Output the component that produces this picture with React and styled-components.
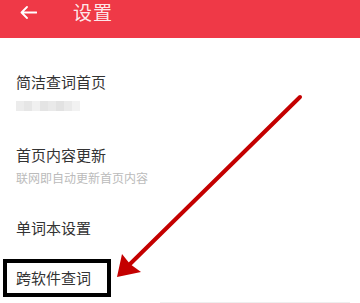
import styled, { createGlobalStyle } from 'styled-components';

const Global = createGlobalStyle`
  html, body {
    margin: 0;
    padding: 0;
    background: #fff;
    overflow: hidden;
  }
  body {
    font-family: "Noto Sans CJK SC", "Noto Sans", sans-serif;
  }
`

const Page = styled.div`
  position: relative;
  width: 360px;
  height: 303px;
  overflow: hidden;
  background: #fff;
`

const Header = styled.header`
  height: 38px;
  background: #ef3947;
  display: flex;
  align-items: flex-start;
  padding: 1px 0 0 20px;
  box-sizing: border-box;
`

const BackButton = styled.div`
  width: 17px;
  height: 22px;
  display: flex;
  align-items: center;
  margin-right: 36px;
`

const Title = styled.h1`
  margin: 0;
  font-size: 19px;
  line-height: 22px;
  font-weight: 400;
  color: rgba(255, 255, 255, 0.9);
  letter-spacing: 1px;
`

const List = styled.div`
  padding-top: 16px;
`

const Item = styled.div`
  display: flex;
  flex-direction: column;
  justify-content: center;
  padding: 0 16px;
  height: ${({ $h }) => $h}px;
  box-sizing: border-box;
`

const ItemTitle = styled.div`
  font-size: 15px;
  line-height: 20px;
  color: #333;
`

const ItemSub = styled.div`
  margin-top: 5px;
  font-size: 12px;
  line-height: 16px;
  color: #bbb;
`

const Pixelated = styled.div`
  display: flex;
  margin-top: 9px;
  height: 10px;
  width: 64px;
`

const Cell = styled.div`
  flex: 1;
  background: ${({ $shade }) => $shade};
`

const Footer = styled.div`
  margin: 0 10px 0 160px;
  border-top: 1px solid #eee;
`

const Highlight = styled.div`
  position: absolute;
  left: 3px;
  top: 259px;
  width: 108px;
  height: 38px;
  border: 4px solid #000;
  box-sizing: border-box;
`

const Overlay = styled.svg`
  position: absolute;
  left: 0;
  top: 0;
  pointer-events: none;
`

const shades = ['#ececec', '#e6e6e6', '#f0f0f0', '#e4e4e4', '#e9e9e9', '#e2e2e2', '#eaeaea', '#f2f2f2']

const App = () => {
  return (
    <>
      <Global />
      <Page>
        <Header>
          <BackButton>
            <svg width="17" height="13" viewBox="0 0 17 13" fill="none">
              <path d="M16.5 6.5H1.5M7 1L1.5 6.5L7 12" stroke="#fff" strokeWidth="1.8" strokeLinecap="round" strokeLinejoin="round" />
            </svg>
          </BackButton>
          <Title>设置</Title>
        </Header>

        <List>
          <Item $h={74}>
            <ItemTitle>简洁查词首页</ItemTitle>
            <Pixelated>
              {shades.map((s, i) => (
                <Cell key={i} $shade={s} />
              ))}
            </Pixelated>
          </Item>
          <Item $h={74}>
            <ItemTitle>首页内容更新</ItemTitle>
            <ItemSub>联网即自动更新首页内容</ItemSub>
          </Item>
          <Item $h={52}>
            <ItemTitle>单词本设置</ItemTitle>
          </Item>
          <Item $h={48}>
            <ItemTitle>跨软件查词</ItemTitle>
          </Item>
        </List>
        <Footer />

        <Highlight />
        <Overlay width="360" height="303" viewBox="0 0 360 303">
          <line x1="300" y1="97" x2="129" y2="265" stroke="#c40000" strokeWidth="4" strokeLinecap="round" />
          <polygon points="117,277 122,254 130,264 141,272" fill="#c40000" />
        </Overlay>
      </Page>
    </>
  )
}

export default App
